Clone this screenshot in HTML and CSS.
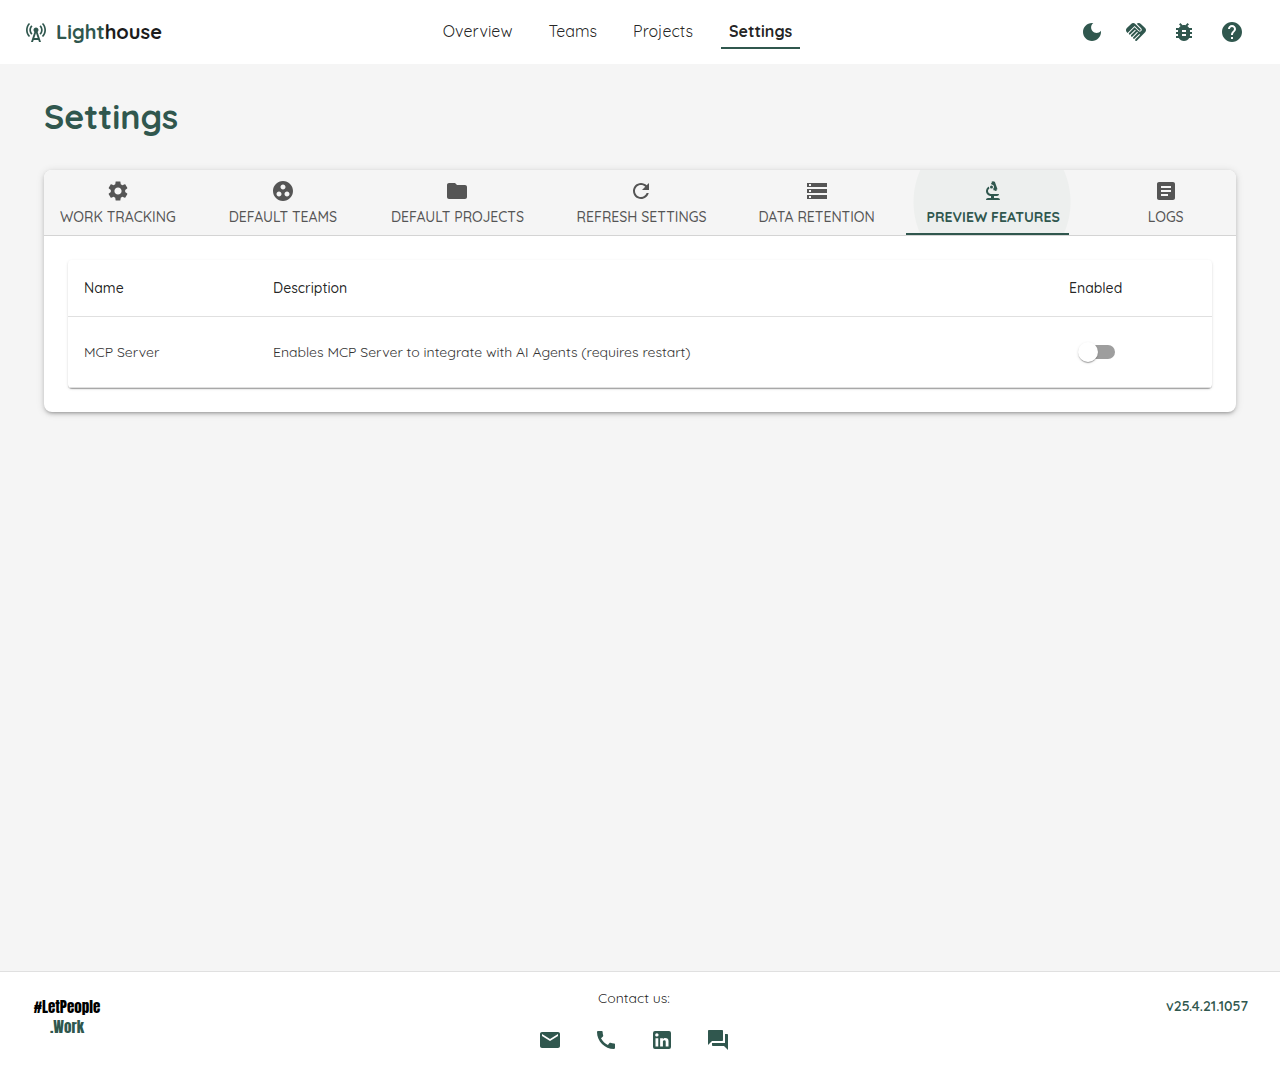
FILE: index.html
```html
<!DOCTYPE html>
<html lang="en">
<head>
<meta charset="utf-8">
<meta name="viewport" content="width=device-width, initial-scale=1">
<title>Lighthouse</title>
<link rel="stylesheet" href="styles.css">
</head>
<body>
<header class="topbar">
  <a class="brand" href="#">
    <svg class="icon" viewBox="0 0 24 24" aria-hidden="true"><path d="M7.3 14.7l1.2-1.2c-1-1-1.5-2.3-1.5-3.5 0-1.3.5-2.6 1.5-3.5L7.3 5.3c-1.3 1.3-2 3-2 4.7s.7 3.4 2 4.7zM19.1 2.9l-1.2 1.2c1.6 1.6 2.4 3.8 2.4 5.9 0 2.1-.8 4.3-2.4 5.9l1.2 1.2c2-2 2.9-4.5 2.9-7.1 0-2.6-1-5.1-2.9-7.1z"/><path d="M6.1 4.1L4.9 2.9C3 4.9 2 7.4 2 10c0 2.6 1 5.1 2.9 7.1l1.2-1.2c-1.6-1.6-2.4-3.8-2.4-5.9 0-2.1.8-4.3 2.4-5.9zm10.6 10.6c1.3-1.3 2-3 2-4.7-.1-1.7-.7-3.4-2-4.7l-1.2 1.2c1 1 1.5 2.3 1.5 3.5 0 1.3-.5 2.6-1.5 3.5l1.2 1.2zM14.5 10c0-1.38-1.12-2.5-2.5-2.5S9.5 8.62 9.5 10c0 .76.34 1.42.87 1.88L7 22h2l.67-2h4.67l.66 2h2l-3.37-10.12c.53-.46.87-1.12.87-1.88zm-4.17 8L12 13l1.67 5h-3.34z"/></svg>
    <span class="brand-name"><span class="brand-accent">Light</span>house</span>
  </a>
  <nav class="nav">
    <a class="nav-link" href="#">Overview</a>
    <a class="nav-link" href="#">Teams</a>
    <a class="nav-link" href="#">Projects</a>
    <a class="nav-link nav-link-active" href="#" aria-current="page">Settings</a>
  </nav>
  <div class="actions">
    <button class="icon-button icon-button-small" type="button" aria-label="Dark mode"><svg class="icon" viewBox="0 0 24 24"><path d="M12 3c-4.97 0-9 4.03-9 9s4.03 9 9 9 9-4.03 9-9c0-.46-.04-.92-.1-1.36-.98 1.37-2.58 2.26-4.4 2.26-2.98 0-5.4-2.42-5.4-5.4 0-1.81.89-3.42 2.26-4.4-.44-.06-.9-.1-1.36-.1z"/></svg></button>
    <a class="icon-button" href="#" aria-label="Contributors"><svg class="icon" viewBox="0 0 24 24"><path d="M16.48 10.41c-.39.39-1.04.39-1.43 0l-4.47-4.46-7.05 7.04-.66-.63c-1.17-1.17-1.17-3.07 0-4.24l4.24-4.24c1.17-1.17 3.07-1.17 4.24 0L16.48 9c.39.39.39 1.02 0 1.41zm.7-2.12c.78.78.78 2.05 0 2.83-1.27 1.27-2.61.22-2.83 0l-3.76-3.76-5.57 5.57c-.39.39-.39 1.02 0 1.41.39.39 1.02.39 1.42 0l4.62-4.62.71.71-4.62 4.62c-.39.39-.39 1.02 0 1.41.39.39 1.02.39 1.42 0l4.62-4.62.71.71-4.62 4.62c-.39.39-.39 1.02 0 1.41.39.39 1.02.39 1.41 0l4.62-4.62.71.71-4.62 4.62c-.39.39-.39 1.02 0 1.41.39.39 1.02.39 1.41 0l8.32-8.34c1.17-1.17 1.17-3.07 0-4.24l-4.24-4.24c-1.15-1.15-3.01-1.17-4.18-.06l4.47 4.47z"/></svg></a>
    <a class="icon-button" href="#" aria-label="Report a bug"><svg class="icon" viewBox="0 0 24 24"><path d="M20 8h-2.81c-.45-.78-1.07-1.45-1.82-1.96L17 4.41 15.59 3l-2.17 2.17C12.96 5.06 12.49 5 12 5s-.96.06-1.41.17L8.41 3 7 4.41l1.62 1.63C7.88 6.55 7.26 7.22 6.81 8H4v2h2.09c-.05.33-.09.66-.09 1v1H4v2h2v1c0 .34.04.67.09 1H4v2h2.81c1.04 1.79 2.97 3 5.19 3s4.15-1.21 5.19-3H20v-2h-2.09c.05-.33.09-.66.09-1v-1h2v-2h-2v-1c0-.34-.04-.67-.09-1H20V8zm-6 8h-4v-2h4v2zm0-4h-4v-2h4v2z"/></svg></a>
    <a class="icon-button" href="#" aria-label="Help"><svg class="icon" viewBox="0 0 24 24"><path d="M12 2C6.48 2 2 6.48 2 12s4.48 10 10 10 10-4.48 10-10S17.52 2 12 2zm1 17h-2v-2h2v2zm2.07-7.75l-.9.92C13.45 12.9 13 13.5 13 15h-2v-.5c0-1.1.45-2.1 1.17-2.83l1.24-1.26c.37-.36.59-.86.59-1.41 0-1.1-.9-2-2-2s-2 .9-2 2H8c0-2.21 1.79-4 4-4s4 1.79 4 4c0 .88-.36 1.68-.93 2.25z"/></svg></a>
  </div>
</header>

<main class="content">
  <h1 class="page-title">Settings</h1>
  <section class="card">
    <div class="tabs" role="tablist">
      <button class="tab" type="button" role="tab"><svg class="icon" viewBox="0 0 24 24"><path d="M19.14 12.94c.04-.3.06-.61.06-.94 0-.32-.02-.64-.07-.94l2.03-1.58c.18-.14.23-.41.12-.61l-1.92-3.32c-.12-.22-.37-.29-.59-.22l-2.39.96c-.5-.38-1.03-.7-1.62-.94l-.36-2.54c-.04-.24-.24-.41-.48-.41h-3.84c-.24 0-.43.17-.47.41l-.36 2.54c-.59.24-1.13.57-1.62.94l-2.39-.96c-.22-.08-.47 0-.59.22L2.74 8.87c-.12.21-.08.47.12.61l2.03 1.58c-.05.3-.09.63-.09.94s.02.64.07.94l-2.03 1.58c-.18.14-.23.41-.12.61l1.92 3.32c.12.22.37.29.59.22l2.39-.96c.5.38 1.03.7 1.62.94l.36 2.54c.05.24.24.41.48.41h3.84c.24 0 .44-.17.47-.41l.36-2.54c.59-.24 1.13-.56 1.62-.94l2.39.96c.22.08.47 0 .59-.22l1.92-3.32c.12-.22.07-.47-.12-.61l-2.01-1.58zM12 15.6c-1.98 0-3.6-1.62-3.6-3.6s1.62-3.6 3.6-3.6 3.6 1.62 3.6 3.6-1.62 3.6-3.6 3.6z"/></svg>Work Tracking</button>
      <button class="tab" type="button" role="tab"><svg class="icon" viewBox="0 0 24 24"><path d="M12 2C6.48 2 2 6.48 2 12s4.48 10 10 10 10-4.48 10-10S17.52 2 12 2zM8 17.5c-1.38 0-2.5-1.12-2.5-2.5s1.12-2.5 2.5-2.5 2.5 1.12 2.5 2.5-1.12 2.5-2.5 2.5zM9.5 8c0-1.38 1.12-2.5 2.5-2.5s2.5 1.12 2.5 2.5-1.12 2.5-2.5 2.5S9.5 9.38 9.5 8zm6.5 9.5c-1.38 0-2.5-1.12-2.5-2.5s1.12-2.5 2.5-2.5 2.5 1.12 2.5 2.5-1.12 2.5-2.5 2.5z"/></svg>Default Teams</button>
      <button class="tab" type="button" role="tab"><svg class="icon" viewBox="0 0 24 24"><path d="M10 4H4c-1.1 0-1.99.9-1.99 2L2 18c0 1.1.9 2 2 2h16c1.1 0 2-.9 2-2V8c0-1.1-.9-2-2-2h-8l-2-2z"/></svg>Default Projects</button>
      <button class="tab" type="button" role="tab"><svg class="icon" viewBox="0 0 24 24"><path d="M17.65 6.35C16.2 4.9 14.21 4 12 4c-4.42 0-7.99 3.58-7.99 8s3.57 8 7.99 8c3.73 0 6.84-2.55 7.73-6h-2.08c-.82 2.33-3.04 4-5.65 4-3.31 0-6-2.69-6-6s2.69-6 6-6c1.66 0 3.14.69 4.22 1.78L13 11h7V4l-2.35 2.35z"/></svg>Refresh Settings</button>
      <button class="tab" type="button" role="tab"><svg class="icon" viewBox="0 0 24 24"><path d="M2 20h20v-4H2v4zm2-3h2v2H4v-2zM2 4v4h20V4H2zm4 3H4V5h2v2zm-4 7h20v-4H2v4zm2-3h2v2H4v-2z"/></svg>Data Retention</button>
      <button class="tab tab-active" type="button" role="tab" aria-selected="true"><svg class="icon" viewBox="0 0 24 24"><path d="M7 19c-1.1 0-2 .9-2 2h14c0-1.1-.9-2-2-2h-4v-2h3c1.1 0 2-.9 2-2h-8c-1.66 0-3-1.34-3-3 0-1.09.59-2.04 1.46-2.56C8.17 9.03 8 8.54 8 8c0-.21.04-.42.09-.62C6.28 8.13 5 9.92 5 12c0 2.76 2.24 5 5 5v2H7z"/><path d="M10.56 5.51C11.91 5.54 13 6.64 13 8c0 .75-.33 1.41-.85 1.87l.59 1.62.94-.34.34.94 1.88-.68-.34-.94.94-.34-2.74-7.52-.94.34-.34-.94-1.88.68.34.94-.94.35.56 1.53z"/><circle cx="10.5" cy="8" r="1.5"/></svg>Preview Features</button>
      <button class="tab" type="button" role="tab"><svg class="icon" viewBox="0 0 24 24"><path d="M19 3H5c-1.1 0-2 .9-2 2v14c0 1.1.9 2 2 2h14c1.1 0 2-.9 2-2V5c0-1.1-.9-2-2-2zm-5 14H7v-2h7v2zm3-4H7v-2h10v2zm0-4H7V7h10v2z"/></svg>Logs</button>
    </div>
    <div class="panel" role="tabpanel">
      <table class="features">
        <colgroup><col class="col-name"><col class="col-description"><col class="col-enabled"></colgroup>
        <thead>
          <tr><th>Name</th><th>Description</th><th>Enabled</th></tr>
        </thead>
        <tbody>
          <tr>
            <td>MCP Server</td>
            <td>Enables MCP Server to integrate with AI Agents (requires restart)</td>
            <td><input class="switch" type="checkbox" role="switch" aria-label="Enable MCP Server"></td>
          </tr>
        </tbody>
      </table>
    </div>
  </section>
</main>

<footer class="footer">
  <a class="footer-logo" href="#">#LetPeople<span class="footer-logo-accent">.Work</span></a>
  <div class="contact">
    <p class="contact-label">Contact us:</p>
    <div class="contact-links">
      <a class="contact-link" href="#" aria-label="Email"><svg class="icon" viewBox="0 0 24 24"><path d="M20 4H4c-1.1 0-1.99.9-1.99 2L2 18c0 1.1.9 2 2 2h16c1.1 0 2-.9 2-2V6c0-1.1-.9-2-2-2zm0 4l-8 5-8-5V6l8 5 8-5v2z"/></svg></a>
      <a class="contact-link" href="#" aria-label="Phone"><svg class="icon" viewBox="0 0 24 24"><path d="M20.01 15.38c-1.23 0-2.42-.2-3.53-.56-.35-.12-.74-.03-1.01.24l-1.57 1.97c-2.83-1.35-5.48-3.9-6.89-6.83l1.95-1.66c.27-.28.35-.67.24-1.02-.37-1.11-.56-2.3-.56-3.53 0-.54-.45-.99-.99-.99H4.19C3.65 3 3 3.24 3 3.99 3 13.28 10.73 21 20.01 21c.71 0 .99-.63.99-1.18v-3.45c0-.54-.45-.99-.99-.99z"/></svg></a>
      <a class="contact-link" href="#" aria-label="LinkedIn"><svg class="icon" viewBox="0 0 24 24"><path d="M19 3a2 2 0 0 1 2 2v14a2 2 0 0 1-2 2H5a2 2 0 0 1-2-2V5a2 2 0 0 1 2-2h14m-.5 15.5v-5.3a3.26 3.26 0 0 0-3.26-3.26c-.85 0-1.84.52-2.32 1.3v-1.11h-2.79v8.37h2.79v-4.93c0-.77.62-1.4 1.39-1.4a1.4 1.4 0 0 1 1.4 1.4v4.93h2.79M6.88 8.56a1.68 1.68 0 0 0 1.68-1.68c0-.93-.75-1.69-1.68-1.69a1.69 1.69 0 0 0-1.69 1.69c0 .93.76 1.68 1.69 1.68m1.39 9.94v-8.37H5.5v8.37h2.77z"/></svg></a>
      <a class="contact-link" href="#" aria-label="Community"><svg class="icon" viewBox="0 0 24 24"><path d="M21 6h-2v9H6v2c0 .55.45 1 1 1h11l4 4V7c0-.55-.45-1-1-1zm-4 6V3c0-.55-.45-1-1-1H3c-.55 0-1 .45-1 1v14l4-4h10c.55 0 1-.45 1-1z"/></svg></a>
    </div>
  </div>
  <a class="version" href="#">v25.4.21.1057</a>
</footer>
</body>
</html>
```
FILE: styles.css
```css
:root {
  --green: #30574e;
  --text: rgba(0, 0, 0, 0.87);
  --muted: #555;
  --line: #e0e0e0;
}

* {
  box-sizing: border-box;
}

body {
  margin: 0;
  min-height: 100vh;
  display: flex;
  flex-direction: column;
  background: #f5f5f5;
  color: var(--text);
  font-family: Quicksand, Lato, sans-serif;
  font-size: 14px;
  line-height: 20px;
}

a {
  color: inherit;
  text-decoration: none;
}

button {
  border: 0;
  padding: 0;
  background: none;
  font: inherit;
  color: inherit;
  cursor: pointer;
}

.icon {
  display: block;
  width: 24px;
  height: 24px;
  fill: currentColor;
}

/* Top bar */
.topbar {
  display: flex;
  align-items: center;
  justify-content: space-between;
  min-height: 64px;
  padding: 0 24px;
  background: #fff;
}

.brand {
  display: flex;
  align-items: center;
  gap: 8px;
  min-width: 139px;
  color: var(--green);
}

.brand-name {
  color: #1c1c1c;
  font-size: 20px;
  line-height: 32px;
  font-weight: 700;
}

.brand-accent {
  color: var(--green);
}

.nav {
  display: flex;
  gap: 20px;
}

.nav-link {
  padding: 4px 8px;
  border-bottom: 2px solid transparent;
  font-size: 16px;
  line-height: 24px;
}

.nav-link-active {
  border-color: var(--green);
  font-weight: 700;
}

.actions {
  display: flex;
  color: var(--green);
}

.icon-button {
  display: flex;
  align-items: center;
  justify-content: center;
  width: 48px;
  height: 40px;
}

.icon-button-small {
  width: 40px;
}

/* Page */
.content {
  flex: 1;
  padding: 32px 44px;
}

.page-title {
  margin: 0 0 32px;
  color: var(--green);
  font-size: 34px;
  line-height: 42px;
  font-weight: 700;
}

.card {
  overflow: hidden;
  border-radius: 8px;
  background: #fff;
  box-shadow: 0 3px 3px -2px rgba(0, 0, 0, 0.2), 0 2px 4px rgba(0, 0, 0, 0.14), 0 1px 8px rgba(0, 0, 0, 0.12);
}

.tabs {
  display: grid;
  grid-template-columns: 148fr 143fr 167fr 162fr 149fr 165fr 141fr;
  column-gap: 20px;
  border-bottom: 1px solid #d4d4d4;
  background: #f5f5f5;
}

.tab {
  position: relative;
  display: flex;
  flex-direction: column;
  align-items: center;
  gap: 4px;
  padding: 9px 0 8px;
  color: var(--muted);
  font-size: 14px;
  line-height: 20px;
  font-weight: 500;
  text-transform: uppercase;
  white-space: nowrap;
}

.tab-active {
  color: var(--green);
  font-weight: 700;
  background: radial-gradient(circle 79px at 81px 32px, #edefee 78px, transparent 79px);
}

.tab-active::after {
  content: "";
  position: absolute;
  left: -5px;
  right: 6px;
  bottom: 0;
  height: 2px;
  background: var(--green);
}

.panel {
  padding: 24px;
}

.features {
  width: 100%;
  table-layout: fixed;
  border-collapse: separate;
  border-spacing: 0;
  border-radius: 4px;
  box-shadow: 0 2px 1px -1px rgba(0, 0, 0, 0.2), 0 1px 1px rgba(0, 0, 0, 0.14), 0 1px 3px rgba(0, 0, 0, 0.12);
}

.col-name {
  width: 189px;
}

.col-enabled {
  width: 159px;
}

.features th,
.features td {
  padding: 16px;
  border-bottom: 1px solid var(--line);
  text-align: left;
}

.features th {
  line-height: 24px;
  font-weight: 500;
}

.features td {
  color: #333;
}

.switch {
  appearance: none;
  display: block;
  position: relative;
  width: 34px;
  height: 14px;
  margin: 12px;
  border-radius: 7px;
  background: #9e9e9e;
  cursor: pointer;
}

.switch::before {
  content: "";
  position: absolute;
  top: -3px;
  left: -3px;
  width: 20px;
  height: 20px;
  border-radius: 50%;
  background: #fff;
  box-shadow: 0 2px 1px -1px rgba(0, 0, 0, 0.2), 0 1px 1px rgba(0, 0, 0, 0.14), 0 1px 3px rgba(0, 0, 0, 0.12);
}

.switch:checked {
  background: #97aba6;
}

.switch:checked::before {
  left: 17px;
  background: var(--green);
}

/* Footer */
.footer {
  display: flex;
  align-items: flex-start;
  justify-content: space-between;
  padding: 16px 32px 20px;
  border-top: 1px solid var(--line);
  background: #fff;
}

.footer-logo {
  display: flex;
  flex-direction: column;
  align-items: center;
  width: 70px;
  padding-top: 9px;
  color: #000;
  font-family: Anton, "Liberation Sans Narrow", sans-serif;
  font-size: 15px;
  line-height: 20px;
}

.footer-logo-accent {
  color: var(--green);
}

.contact {
  display: flex;
  flex-direction: column;
  align-items: center;
  gap: 12px;
}

.contact-label {
  margin: 0;
}

.contact-links {
  display: flex;
  gap: 16px;
  color: var(--green);
}

.contact-link {
  padding: 8px;
}

.version {
  min-width: 82px;
  padding-top: 8px;
  color: var(--green);
  font-weight: 600;
  text-align: right;
}
```
